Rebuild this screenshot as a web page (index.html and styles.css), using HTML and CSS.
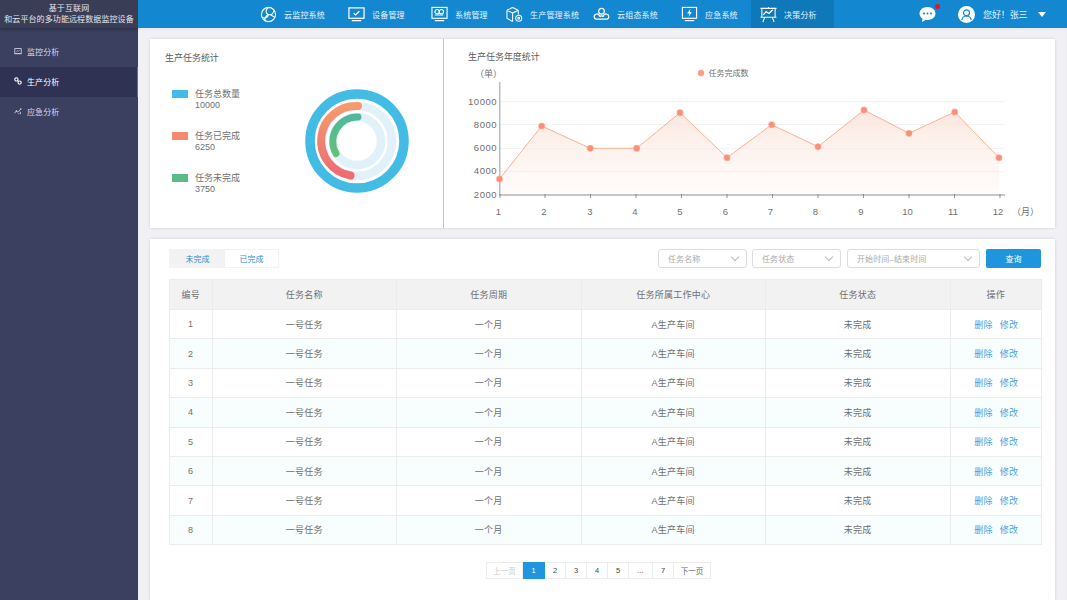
FILE: index.html
```html
<!DOCTYPE html>
<html lang="zh-CN">
<head>
<meta charset="utf-8">
<title>生产分析</title>
<link rel="stylesheet" href="styles.css">
</head>
<body>
<div class="app">
  <aside class="sidebar">
    <div class="brand">基于互联网<br>和云平台的多功能远程数据监控设备</div>
    <ul class="side-menu">
      <li class="side-item">
        <svg class="side-icon" viewBox="0 0 10 10"><rect x="1" y="2" width="8" height="6" fill="none" stroke="#d8dae6"/><path d="M3 6 4.500 4.500 5.500 5.500 7 4M.5 8.500h9" fill="none" stroke="#d8dae6" stroke-width=".8"/></svg>
        <span>监控分析</span>
      </li>
      <li class="side-item active">
        <svg class="side-icon" viewBox="0 0 10 10"><circle cx="3" cy="3" r="2" fill="none" stroke="#fff" stroke-width="1.400"/><circle cx="7" cy="7" r="2" fill="none" stroke="#fff" stroke-width="1.400"/><path d="M4.500 4.500 5.500 5.500" stroke="#fff" stroke-width="1.400"/></svg>
        <span>生产分析</span>
      </li>
      <li class="side-item">
        <svg class="side-icon" viewBox="0 0 10 10"><path d="M.5 8 3 5 5 6.500 8.500 2.500" fill="none" stroke="#d8dae6"/><circle cx="3" cy="5" r="1" fill="#d8dae6"/><circle cx="8.500" cy="2.500" r="1" fill="#d8dae6"/><path d="M6 9V7.500M8 9V6" stroke="#d8dae6"/></svg>
        <span>应急分析</span>
      </li>
    </ul>
  </aside>

  <div class="main">
    <header class="topbar">
      <nav class="nav">
        <a class="nav-item">
          <svg class="nav-icon" viewBox="0 0 18 18" fill="none" stroke="#fff" stroke-width="1.200"><circle cx="9" cy="9" r="7.500"/><path d="M9 1.500C5 4 6 8 9 9s6-1 5.500-5M2 11.500c3 2 6.500 1 7-2.500M5 15.500c0-3 2-6 4-6.500s5 2 6.500 3"/></svg>
          <span>云监控系统</span>
        </a>
        <a class="nav-item">
          <svg class="nav-icon" viewBox="0 0 18 18" fill="none" stroke="#fff" stroke-width="1.300"><rect x="1" y="2" width="16" height="11"/><path d="M6 7.500 8 9.500 12 5.500M4 15.500h10"/></svg>
          <span>设备管理</span>
        </a>
        <a class="nav-item">
          <svg class="nav-icon" viewBox="0 0 18 18" fill="none" stroke="#fff" stroke-width="1.200"><rect x="1" y="1.500" width="16" height="11.500"/><circle cx="6.500" cy="6" r="2.300"/><circle cx="11" cy="6" r="2.300"/><path d="M4 9.500h9M4 15.500h10"/></svg>
          <span>系统管理</span>
        </a>
        <a class="nav-item">
          <svg class="nav-icon" viewBox="0 0 18 18" fill="none" stroke="#fff" stroke-width="1.100"><path d="M1 4.500 7 1.500 13 4.500V9M1 4.500V13l6 3.500M1 4.500 7 7.500 13 4.500M7 7.500v9"/><circle cx="13.500" cy="13" r="3.200"/><circle cx="13.500" cy="13" r="1"/></svg>
          <span>生产管理系统</span>
        </a>
        <a class="nav-item">
          <svg class="nav-icon" viewBox="0 0 18 18" fill="none" stroke="#fff" stroke-width="1.300"><circle cx="9" cy="5.500" r="3"/><path d="M5 14H3.500a2.800 2.800 0 0 1 0-5.500c2-.5 3.500 1 3.500 2.700M13 14h1.500a2.800 2.800 0 0 0 0-5.500c-2-.5-3.500 1-3.500 2.700M5 14h8M7 11.500a2.500 2.500 0 0 1 4 0"/></svg>
          <span>云组态系统</span>
        </a>
        <a class="nav-item">
          <svg class="nav-icon" viewBox="0 0 18 18" fill="none" stroke="#fff" stroke-width="1.200"><rect x="1.500" y="1.500" width="15" height="11.500"/><path d="M4 15.500h10"/><path d="M10 3 6.500 8H9l-1 3.500L11.500 6.500H9.300Z" fill="#fff" stroke="none"/></svg>
          <span>应急系统</span>
        </a>
        <a class="nav-item current">
          <svg class="nav-icon" viewBox="0 0 18 18" fill="none" stroke="#fff" stroke-width="1.100"><path d="M.5 2.500h17M2 2.500V12h14V2.500M.5 12h17M5 12 3 17M13 12l2 5M9 1v1.500"/><path d="M3.500 9.500 6.500 6l3 2 4-4" stroke-width="1.300"/></svg>
          <span>决策分析</span>
        </a>
      </nav>
      <div class="top-right">
        <div class="bubble">
          <svg class="bubble-icon" viewBox="0 0 17 17"><path d="M8.500 1C4 1 .5 3.800.5 7.500c0 2.200 1.200 4 3.100 5.200L3 16l3.700-2.200c.6.100 1.200.2 1.800.2 4.500 0 8-2.900 8-6.500S13 1 8.500 1Z" fill="#fff"/><circle cx="5" cy="7.500" r="1" fill="#1387cf"/><circle cx="8.500" cy="7.500" r="1" fill="#1387cf"/><circle cx="12" cy="7.500" r="1" fill="#1387cf"/></svg>
          <i class="dot"></i>
        </div>
        <div class="user">
          <svg class="avatar" viewBox="0 0 17 17"><circle cx="8.500" cy="8.500" r="8.500" fill="#fff"/><circle cx="8.500" cy="6.800" r="3" fill="none" stroke="#1387cf" stroke-width="1.200"/><path d="M3.800 14c.4-2.800 2.200-4 4.700-4s4.300 1.200 4.700 4" fill="none" stroke="#1387cf" stroke-width="1.200"/></svg>
          <span class="user-name">您好！张三</span>
          <i class="caret"></i>
        </div>
      </div>
    </header>

    <section class="content">
      <div class="card stats">
        <div class="panel-left">
          <h2 class="panel-title">生产任务统计</h2>
          <div class="donut-wrap">
            <ul class="legend">
              <li class="legend-item"><i class="swatch blue"></i><div class="legend-text">任务总数量<br>10000</div></li>
              <li class="legend-item"><i class="swatch orange"></i><div class="legend-text">任务已完成<br>6250</div></li>
              <li class="legend-item"><i class="swatch green"></i><div class="legend-text">任务未完成<br>3750</div></li>
            </ul>
            <svg class="donut" viewBox="0 0 106 106" fill="none">
              <defs>
                <linearGradient id="g1" x1="0" y1="0" x2="0" y2="1"><stop offset="0" stop-color="#f59a6e"/><stop offset="1" stop-color="#ee6b72"/></linearGradient>
                <linearGradient id="g2" x1="0" y1="0" x2="0" y2="1"><stop offset="0" stop-color="#4fb89d"/><stop offset="1" stop-color="#63c177"/></linearGradient>
              </defs>
              <circle cx="53" cy="53" r="47" stroke="#42bce4" stroke-width="9.500"/>
              <circle cx="53" cy="53" r="35" stroke="#e1f0f9" stroke-width="8.500"/>
              <circle cx="53" cy="53" r="24" stroke="#e1f0f9" stroke-width="8.500"/>
              <path d="M54 18A35 35 0 0 0 46.500 87.500" stroke="url(#g1)" stroke-width="8" stroke-linecap="round"/>
              <path d="M54 29A24.500 24.500 0 0 0 32 65.500" stroke="url(#g2)" stroke-width="7" stroke-linecap="round"/>
            </svg>
          </div>
        </div>
        <div class="panel-right">
          <h2 class="panel-title">生产任务年度统计</h2>
          <svg class="chart" viewBox="444 64 611 164">
            <defs>
              <linearGradient id="area" x1="0" y1="0" x2="0" y2="1"><stop offset="0" stop-color="#fbe4da" stop-opacity=".9"/><stop offset="1" stop-color="#fdf1ec" stop-opacity=".25"/></linearGradient>
            </defs>
            <text class="t-unit" x="475" y="77">（单）</text>
            <circle cx="701" cy="73" r="3" fill="#fc9c86"/><circle cx="701" cy="73" r="3.500" fill="#fc9c86" fill-opacity=".4"/>
            <text class="t-legend" x="708.500" y="76">任务完成数</text>
            <path class="grid" d="M500 101.500H1005M500 124.500H1005M500 148.500H1005M500 171.500H1005"/>
            <path d="M499.500 194V179L541.700 126 590.300 148.300 636.700 148.300 680 112.700 727 157.700 771.700 124.700 818 146.700 864 110 909 133.300 954.700 112 999 157.700V194Z" fill="url(#area)"/>
            <polyline points="499.500,179 541.700,126 590.300,148.300 636.700,148.300 680,112.700 727,157.700 771.700,124.700 818,146.700 864,110 909,133.300 954.700,112 999,157.700" fill="none" stroke="#f9b295" stroke-width="1"/>
            <path class="axis" d="M499.800 82V195M499 195H1005"/>
            <path class="tick" d="M500 194v4M545 194v4M590.500 194v4M636 194v4M681.500 194v4M727 194v4M772.500 194v4M818 194v4M863.500 194v4M909 194v4M954.500 194v4M1000 194v4"/>
            <g class="points">
              <circle cx="499.500" cy="179" r="3"/><circle cx="541.700" cy="126" r="3"/><circle cx="590.300" cy="148.300" r="3"/><circle cx="636.700" cy="148.300" r="3"/><circle cx="680" cy="112.700" r="3"/><circle cx="727" cy="157.700" r="3"/><circle cx="771.700" cy="124.700" r="3"/><circle cx="818" cy="146.700" r="3"/><circle cx="864" cy="110" r="3"/><circle cx="909" cy="133.300" r="3"/><circle cx="954.700" cy="112" r="3"/><circle cx="999" cy="157.700" r="3"/>
            </g>
            <g class="t-y">
              <text x="497" y="105">10000</text><text x="497" y="128">8000</text><text x="497" y="151">6000</text><text x="497" y="174">4000</text><text x="497" y="198">2000</text>
            </g>
            <g class="t-x">
              <text x="498.500" y="215">1</text><text x="544" y="215">2</text><text x="590" y="215">3</text><text x="635" y="215">4</text><text x="680" y="215">5</text><text x="725.500" y="215">6</text><text x="770.500" y="215">7</text><text x="815.500" y="215">8</text><text x="861" y="215">9</text><text x="907.500" y="215">10</text><text x="953" y="215">11</text><text x="998" y="215">12</text>
            </g>
            <text class="t-unit" x="1012" y="215">（月）</text>
          </svg>
        </div>
      </div>

      <div class="card tasks">
        <div class="toolbar">
          <div class="tabs">
            <span class="tab on">未完成</span>
            <span class="tab">已完成</span>
          </div>
          <div class="filters">
            <div class="select w-name"><span>任务名称</span><i class="chev"></i></div>
            <div class="select w-name"><span>任务状态</span><i class="chev"></i></div>
            <div class="select w-time"><span>开始时间–结束时间</span><i class="chev"></i></div>
            <button class="query">查询</button>
          </div>
        </div>
        <table class="table">
          <colgroup><col class="c1"><col class="c2"><col class="c2"><col class="c2"><col class="c2"><col class="c6"></colgroup>
          <thead>
            <tr><th>编号</th><th>任务名称</th><th>任务周期</th><th>任务所属工作中心</th><th>任务状态</th><th>操作</th></tr>
          </thead>
          <tbody>
            <tr><td>1</td><td>一号任务</td><td>一个月</td><td>A生产车间</td><td>未完成</td><td><a class="link">删除</a><a class="link">修改</a></td></tr>
            <tr><td>2</td><td>一号任务</td><td>一个月</td><td>A生产车间</td><td>未完成</td><td><a class="link">删除</a><a class="link">修改</a></td></tr>
            <tr><td>3</td><td>一号任务</td><td>一个月</td><td>A生产车间</td><td>未完成</td><td><a class="link">删除</a><a class="link">修改</a></td></tr>
            <tr><td>4</td><td>一号任务</td><td>一个月</td><td>A生产车间</td><td>未完成</td><td><a class="link">删除</a><a class="link">修改</a></td></tr>
            <tr><td>5</td><td>一号任务</td><td>一个月</td><td>A生产车间</td><td>未完成</td><td><a class="link">删除</a><a class="link">修改</a></td></tr>
            <tr><td>6</td><td>一号任务</td><td>一个月</td><td>A生产车间</td><td>未完成</td><td><a class="link">删除</a><a class="link">修改</a></td></tr>
            <tr><td>7</td><td>一号任务</td><td>一个月</td><td>A生产车间</td><td>未完成</td><td><a class="link">删除</a><a class="link">修改</a></td></tr>
            <tr><td>8</td><td>一号任务</td><td>一个月</td><td>A生产车间</td><td>未完成</td><td><a class="link">删除</a><a class="link">修改</a></td></tr>
          </tbody>
        </table>
        <div class="pager">
          <span class="page wide muted">上一页</span>
          <span class="page now">1</span>
          <span class="page">2</span>
          <span class="page">3</span>
          <span class="page">4</span>
          <span class="page">5</span>
          <span class="page more">...</span>
          <span class="page">7</span>
          <span class="page wide">下一页</span>
        </div>
      </div>
    </section>
  </div>
</div>
</body>
</html>
```
FILE: styles.css
```css
* { box-sizing: border-box; }
html, body { margin: 0; height: 100%; overflow: hidden; }
body {
  font-family: "Liberation Sans", "Noto Sans CJK SC", sans-serif;
  font-size: 9px;
  color: #707070;
  background: #f0f0f5;
}
ul { list-style: none; margin: 0; padding: 0; }
h2 { margin: 0; font-weight: 400; }

.app { display: flex; width: 1067px; height: 600px; }

/* sidebar */
.sidebar { width: 138px; flex: none; background: #3b3f60; color: #d8dae6; }
.brand {
  height: 28px;
  padding-top: 4px;
  background: #3a3d56;
  box-shadow: 0 1px 3px rgba(0, 0, 0, .35);
  text-align: center;
  font-size: 8px;
  line-height: 10.500px;
  letter-spacing: .1px;
  color: #e3e4ec;
  white-space: nowrap;
}
.side-menu { padding-top: 9px; }
.side-item {
  display: flex;
  align-items: center;
  height: 30px;
  padding: 0 0 2px 14px;
  gap: 5px;
  font-size: 8px;
  letter-spacing: .1px;
}
.side-item.active { background: #2f3252; border-right: 1px solid #1d88cf; color: #fff; }
.side-icon { width: 8px; height: 8px; flex: none; }

/* main */
.main { flex: 1; min-width: 0; display: flex; flex-direction: column; }
.topbar {
  height: 28px;
  flex: none;
  display: flex;
  align-items: stretch;
  background: #1387cf;
  color: #e6f2fa;
}
.nav {
  display: grid;
  grid-template-columns: 88px 83px 75px 87px 88px 79px 83px;
  margin-left: 113px;
}
.nav-item {
  display: flex;
  align-items: center;
  gap: 7px;
  padding-left: 9px;
  font-size: 8px;
  letter-spacing: .2px;
  white-space: nowrap;
}
.nav-item.current { background: #0f78b9; }
.nav-icon { width: 17px; height: 17px; flex: none; }
.top-right { display: flex; align-items: center; margin-left: 85px; }
.bubble { position: relative; width: 17px; height: 17px; }
.bubble-icon { width: 17px; height: 17px; display: block; }
.dot {
  position: absolute;
  left: 16px;
  top: -2px;
  width: 5px;
  height: 5px;
  border-radius: 50%;
  background: #f0101e;
}
.user { display: flex; align-items: center; margin-left: 22px; }
.avatar { width: 17px; height: 17px; flex: none; }
.user-name { margin-left: 8px; font-size: 9px; letter-spacing: -.1px; white-space: nowrap; }
.caret {
  margin-left: 10px;
  width: 0;
  height: 0;
  border-left: 4px solid transparent;
  border-right: 4px solid transparent;
  border-top: 5px solid #fff;
}

/* content */
.content {
  flex: 1;
  min-height: 0;
  display: flex;
  flex-direction: column;
  gap: 11px;
  padding: 11px 12px 0 12px;
  box-shadow: inset 0 2px 2px rgba(0, 0, 0, .03);
}
.card { background: #fff; box-shadow: 0 0 3px rgba(0, 0, 0, .14); }
.stats { display: flex; height: 189px; flex: none; }
.panel-left { width: 293px; flex: none; padding: 13px 0 0 15px; }
.panel-right { flex: 1; min-width: 0; border-left: 1px solid #c4c4c4; }
.panel-title { font-size: 9px; line-height: 13px; letter-spacing: -.03px; color: #5c5c5c; }
.panel-right .panel-title { padding: 12px 0 0 24px; height: 25px; }
.chart { display: block; width: 611px; height: 164px; }

.donut-wrap { display: flex; align-items: flex-start; padding: 18px 0 0 7px; }
.legend { width: 132px; flex: none; padding-top: 5px; display: flex; flex-direction: column; gap: 19px; }
.legend-item { display: flex; gap: 7px; font-size: 9px; line-height: 11px; height: 23px; }
.legend-text { padding-top: 1px; }
.swatch { width: 16px; height: 8px; margin-top: 2px; flex: none; }
.swatch.blue { background: #42bce4; }
.swatch.orange { background: #f58a70; }
.swatch.green { background: #5cb98a; }
.donut { width: 106px; height: 106px; display: block; margin-top: 5px; flex: none; }

.t-unit { font-size: 9px; fill: #707070; }
.t-legend { font-size: 8px; fill: #707070; }
.t-y text { font-size: 9.500px; fill: #707070; text-anchor: end; letter-spacing: .5px; }
.t-x text { font-size: 9.500px; fill: #707070; text-anchor: middle; }
.grid { stroke: #f3f3f3; stroke-width: 1; fill: none; }
.axis { stroke: #b4b4b4; stroke-width: 1.300; fill: none; }
.tick { stroke: #777; stroke-width: .8; fill: none; }
.points circle { fill: #fc8f79; stroke: #fc9c86; stroke-opacity: .45; stroke-width: 1.200; }

/* tasks */
.tasks { flex: 1; min-height: 0; padding: 10px 14px 0 19px; }
.toolbar { display: flex; justify-content: space-between; align-items: flex-start; height: 20px; }
.tabs { display: flex; height: 19px; border: 1px solid #f3f3f3; width: 110px; }
.tab { display: flex; align-items: center; justify-content: center; flex: 1; font-size: 8px; color: #2b8fd6; }
.tab.on { background: #f2f2f2; width: 55px; flex: none; }
.filters { display: flex; align-items: center; gap: 5px; }
.select {
  display: flex;
  align-items: center;
  justify-content: space-between;
  height: 19px;
  padding: 0 6px 0 9px;
  border: 1px solid #ddd;
  border-radius: 3px;
  font-size: 8px;
  letter-spacing: .1px;
  color: #aaa;
}
.w-name { width: 89px; }
.w-time { width: 133px; margin-left: 1px; }
.chev {
  width: 6px;
  height: 6px;
  margin: -3px 2px 0 0;
  border-right: 1px solid #bbb;
  border-bottom: 1px solid #bbb;
  transform: rotate(45deg);
}
.query {
  width: 55px;
  height: 19px;
  margin-left: 1px;
  padding: 0;
  border: 0;
  border-radius: 2px;
  background: #1e95dc;
  color: #fff;
  font: inherit;
  font-size: 8px;
}

.table {
  width: 872px;
  margin-top: 10px;
  border-collapse: collapse;
  table-layout: fixed;
}
.c1 { width: 42.500px; }
.c2 { width: 184.500px; }
.c6 { width: 91.500px; }
.table th, .table td {
  border: 1px solid #ececec;
  text-align: center;
  padding: 0;
  font-size: 9px;
  font-weight: 400;
  letter-spacing: .25px;
  color: #707070;
}
.table th { height: 30px; background: #f2f2f2; }
.table td { height: 29.400px; }
.table td:last-child { padding-left: 1px; }
.table tbody tr:nth-child(even) td { background: #f8fdfd; }
.table td .link { color: #4aa3e0; }
.link + .link { margin-left: 7px; }

.pager {
  display: flex;
  justify-content: center;
  margin-top: 17px;
  margin-right: 13px;
  height: 17px;
}
.page {
  width: 21px;
  display: flex;
  align-items: center;
  justify-content: center;
  border: 1px solid #ececec;
  border-left: 0;
  font-size: 7.500px;
  color: #444;
}
.page.wide { width: 37px; color: #666; }
.page.wide:first-child { border-left: 1px solid #ececec; }
.page.more { width: 24px; }
.page.muted { color: #c8c8c8; }
.page.now { width: 22px; background: #1e95dc; border-color: #1e95dc; color: #fff; }
```
